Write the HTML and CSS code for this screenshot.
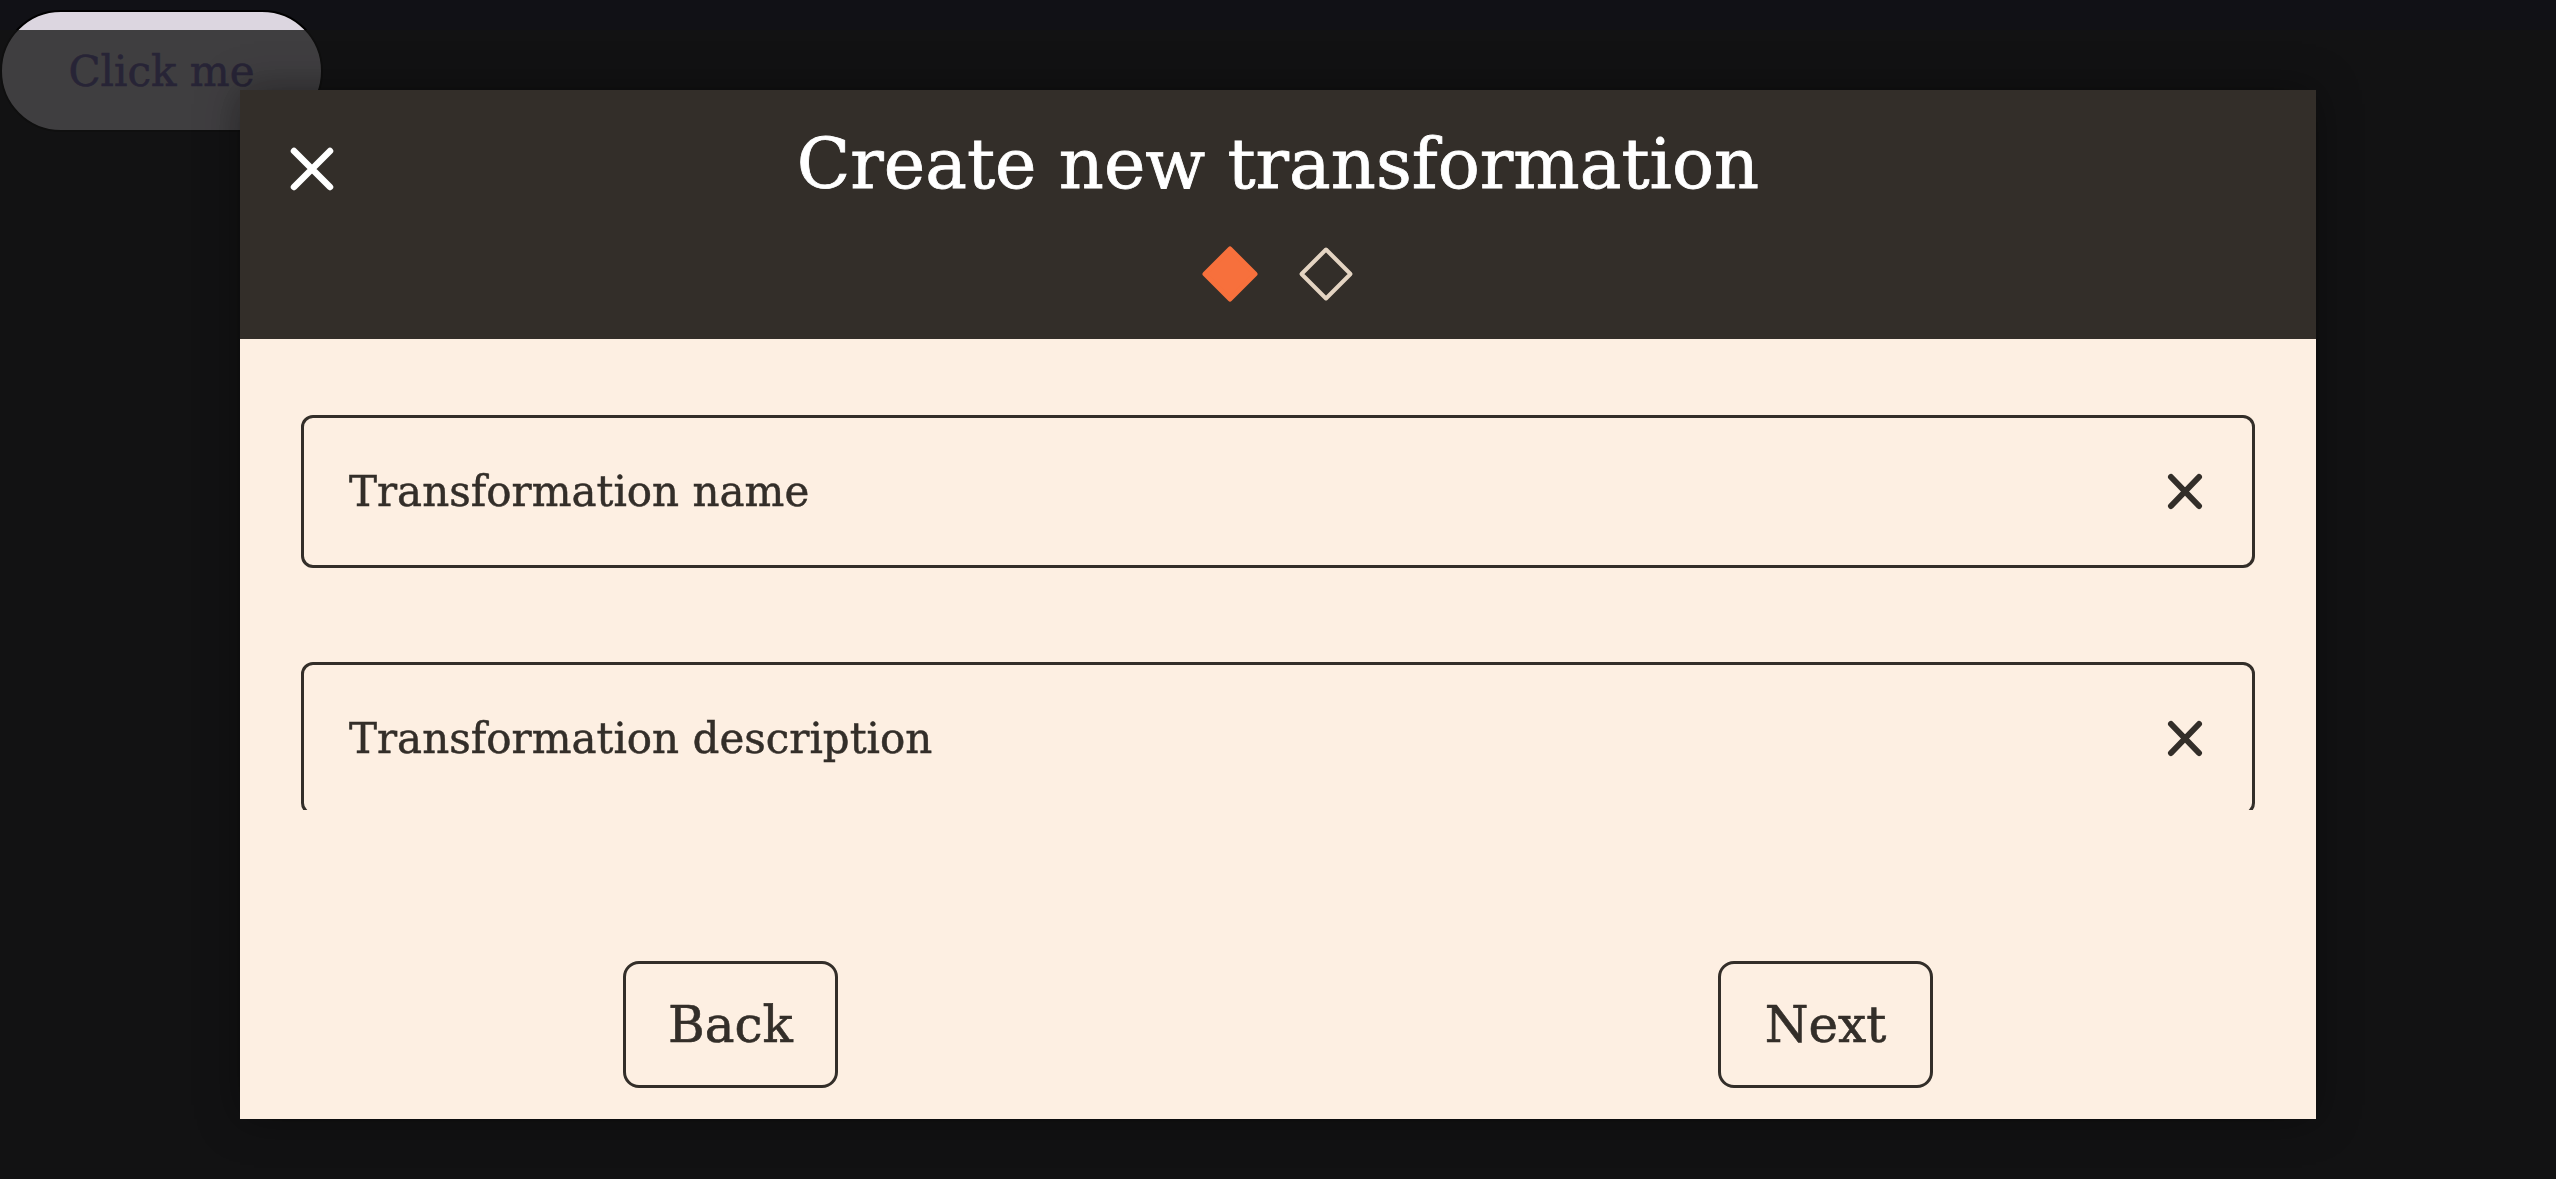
FILE: index.html
```html
<!DOCTYPE html>
<html lang="en">
<head>
<meta charset="utf-8">
<title>Create new transformation</title>
<link rel="stylesheet" href="styles.css">
</head>
<body>
<button class="trigger" type="button">Click me</button>
<div class="overlay"></div>
<div class="modal" role="dialog" aria-labelledby="modal-title">
  <header class="modal-header">
    <button class="close-btn" type="button" aria-label="Close">
      <svg viewBox="0 0 46 46" width="46" height="46"><path d="M5 5 L41 41 M41 5 L5 41" stroke="#ffffff" stroke-width="6.5" stroke-linecap="round" fill="none"/></svg>
    </button>
    <h1 class="modal-title" id="modal-title">Create new transformation</h1>
    <div class="steps">
      <svg class="step" viewBox="0 0 56 56" width="56" height="56"><path d="M28 3 L53 28 L28 53 L3 28 Z" fill="#f7703c" stroke="#f7703c" stroke-width="5" stroke-linejoin="round"/></svg>
      <svg class="step" viewBox="0 0 56 56" width="56" height="56"><path d="M28 3.5 L52.5 28 L28 52.5 L3.5 28 Z" fill="none" stroke="#e4d4c2" stroke-width="4" stroke-linejoin="round"/></svg>
    </div>
  </header>
  <div class="modal-body">
    <div class="field">
      <span class="field-label">Transformation name</span>
      <svg class="field-clear" viewBox="0 0 36 37" width="36" height="37"><path d="M4 4 L32 33 M32 4 L4 33" stroke="#332e29" stroke-width="6" stroke-linecap="round" fill="none"/></svg>
    </div>
    <div class="field">
      <span class="field-label">Transformation description</span>
      <svg class="field-clear" viewBox="0 0 36 37" width="36" height="37"><path d="M4 4 L32 33 M32 4 L4 33" stroke="#332e29" stroke-width="6" stroke-linecap="round" fill="none"/></svg>
    </div>
  </div>
  <footer class="modal-footer">
    <button class="nav-btn" type="button">Back</button>
    <button class="nav-btn" type="button">Next</button>
  </footer>
</div>
</body>
</html>
```
FILE: styles.css
```css
html, body {
  margin: 0;
  padding: 0;
}
body {
  width: 2556px;
  height: 1179px;
  background: #111116;
  font-family: "DejaVu Serif", "Liberation Serif", serif;
  overflow: hidden;
}
.trigger {
  display: block;
  margin: 10px 0 0 0;
  width: 323px;
  height: 122px;
  border: 2px solid #000;
  border-radius: 61px;
  background: #dcd6e0;
  color: #6e5fb0;
  font-family: "DejaVu Serif", serif;
  font-size: 42px;
  -webkit-text-stroke: 0.6px #6e5fb0;
  padding: 0;
}
.overlay {
  position: fixed;
  left: 0;
  right: 0;
  top: 30px;
  bottom: 0;
  background: rgba(19, 19, 19, 0.78);
}
.modal {
  position: fixed;
  left: 240px;
  top: 90px;
  width: 2076px;
  height: 1029px;
  display: flex;
  flex-direction: column;
  background: #fdefe2;
  box-shadow: 0 0 40px rgba(0, 0, 0, 0.45);
}
.modal-header {
  position: relative;
  height: 249px;
  flex: none;
  background: #332e29;
  display: flex;
  flex-direction: column;
  align-items: center;
  box-sizing: border-box;
  padding-top: 38px;
}
.close-btn {
  position: absolute;
  left: 49px;
  top: 56px;
  width: 46px;
  height: 46px;
  padding: 0;
  border: 0;
  background: none;
}
.close-btn svg { display: block; }
.modal-title {
  margin: 0;
  color: #ffffff;
  font-weight: 400;
  font-size: 70px;
  line-height: 72px;
  -webkit-text-stroke: 0.8px #ffffff;
}
.steps {
  display: flex;
  gap: 40px;
  margin-top: 46px;
}
.step { display: block; }
.modal-body {
  height: 471px;
  flex: none;
  overflow: hidden;
  box-sizing: border-box;
  padding: 76px 61px 0 61px;
  display: flex;
  flex-direction: column;
  gap: 94px;
}
.field {
  flex: none;
  height: 153px;
  box-sizing: border-box;
  border: 3px solid #332e29;
  border-radius: 12px;
  display: flex;
  align-items: center;
  padding: 0 49px 0 45px;
}
.field-label {
  flex: 1;
  color: #332e29;
  font-size: 42px;
  -webkit-text-stroke: 0.5px #332e29;
}
.field-clear { display: block; flex: none; }
.modal-footer {
  display: flex;
  justify-content: center;
  gap: 880px;
  padding-top: 151px;
}
.nav-btn {
  width: 215px;
  height: 127px;
  box-sizing: border-box;
  border: 3px solid #332e29;
  border-radius: 16px;
  background: transparent;
  color: #332e29;
  font-family: "DejaVu Serif", serif;
  font-size: 50px;
  -webkit-text-stroke: 0.6px #332e29;
  padding: 0;
}
```
